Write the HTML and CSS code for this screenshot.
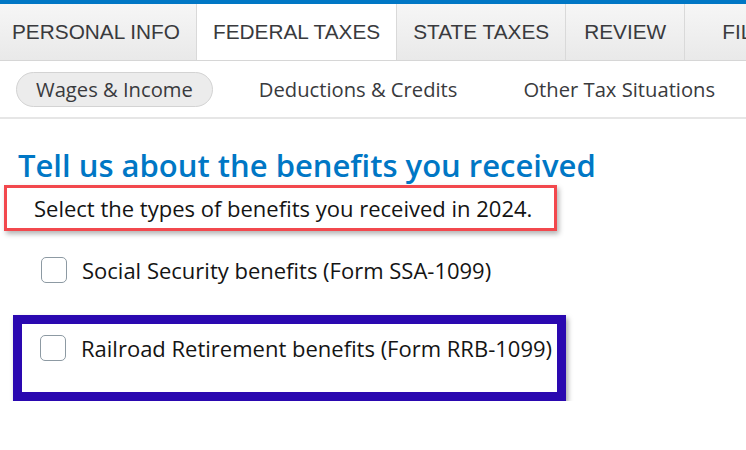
FILE: index.html
```html
<!DOCTYPE html>
<html lang="en">
<head>
    <meta charset="UTF-8">
    <meta name="viewport" content="width=device-width, initial-scale=1.0">
    <title>Federal Taxes - Benefits</title>
    <link rel="stylesheet" href="styles.css">
</head>
<body>

<div class="top-nav">
    <div class="tab tab-first">PERSONAL INFO</div>
    <div class="tab active">FEDERAL TAXES</div>
    <div class="tab">STATE TAXES</div>
    <div class="tab tab-review">REVIEW</div>
    <div class="tab tab-last">FILE</div>
</div>

<div class="sub-nav">
    <div class="sub-item selected">Wages &amp; Income</div>
    <div class="sub-item">Deductions &amp; Credits</div>
    <div class="sub-item">Other Tax Situations</div>
</div>

<div class="content">
    <h1>Tell us about the benefits you received</h1>
    <p class="instruction">Select the types of benefits you received in 2024.</p>

    <label class="option">
        <span class="checkbox"></span>
        <span>Social Security benefits (Form SSA-1099)</span>
    </label>

    <div class="highlight">
        <label class="option">
            <span class="checkbox"></span>
            <span>Railroad Retirement benefits (Form RRB-1099)</span>
        </label>
    </div>
</div>

</body>
</html>
```

FILE: styles.css
```css
body {
    margin: 0;
    padding: 0;
    font-family: "Open Sans", "Noto Sans", sans-serif;
    color: #141414;
    background-color: white;
    overflow: hidden;
}
.top-nav {
    display: flex;
    height: 56px;
    border-top: 4px solid #0077c5;
    border-bottom: 1px solid #d6d6d6;
    white-space: nowrap;
}
.tab {
    display: flex;
    align-items: center;
    padding: 0 16px;
    font-family: "Liberation Sans", Arial, sans-serif;
    font-size: 20.8px;
    color: #393a3d;
    background: linear-gradient(#f6f6f6, #e9e9e9);
    border-right: 1px solid #d9d9d9;
}
.tab-first {
    padding-left: 12px;
}
.tab-review {
    padding: 0 18px;
}
.tab-last {
    padding-left: 37px;
}
.tab.active {
    background: white;
}
.sub-nav {
    display: flex;
    align-items: center;
    gap: 26px;
    height: 56px;
    padding-left: 16px;
    border-bottom: 2px solid #e6e6e6;
    white-space: nowrap;
}
.sub-item {
    padding: 0 19px;
    height: 33px;
    line-height: 33px;
    font-size: 20.2px;
    color: #393a3d;
    border: 1px solid transparent;
    border-radius: 18px;
}
.sub-item.selected {
    background-color: #ececec;
    border-color: #d3d3d3;
}
.content {
    padding-left: 18px;
}
h1 {
    margin: 26px 0 0 0;
    font-size: 31px;
    line-height: 40px;
    font-weight: 600;
    color: #0077c5;
    white-space: nowrap;
}
.instruction {
    margin: 0 0 0 -14px;
    width: 520px;
    height: 40px;
    line-height: 40px;
    padding-left: 27px;
    font-size: 22px;
    border: 3px solid #f2484d;
    box-shadow: 2px 3px 5px rgba(0, 0, 0, 0.3);
    white-space: nowrap;
}
.option {
    display: flex;
    align-items: center;
    gap: 15px;
    font-size: 22px;
    white-space: nowrap;
}
.content > .option {
    margin: 24px 0 0 23px;
}
.checkbox {
    flex: none;
    width: 24px;
    height: 24px;
    border: 1px solid #8d9aa3;
    border-radius: 5px;
    background: white;
}
.highlight {
    margin: 30px 0 0 -5px;
    width: 517px;
    height: 59px;
    padding: 9px 0 0 18px;
    border: 9px solid #2a08b0;
    box-shadow: 2px 3px 5px rgba(0, 0, 0, 0.35);
}
```
